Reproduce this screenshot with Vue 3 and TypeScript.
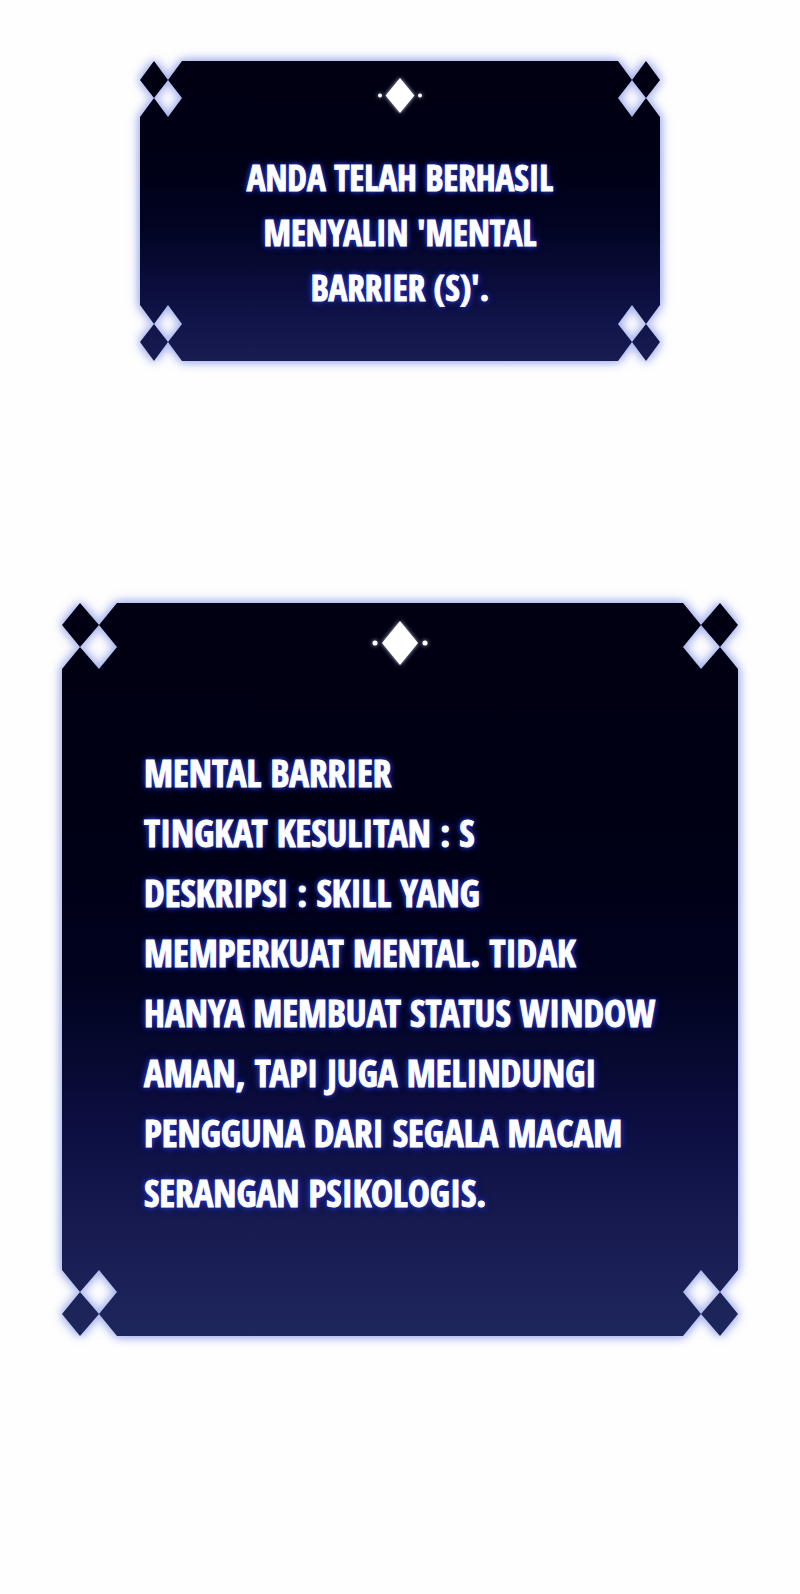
<script setup lang="ts">
interface StatusPanel {
  id: string
  kind: 'notice' | 'detail'
  lines: string[]
}

const panels: StatusPanel[] = [
  {
    id: 'copied',
    kind: 'notice',
    lines: ['ANDA TELAH BERHASIL', "MENYALIN 'MENTAL", "BARRIER (S)'."],
  },
  {
    id: 'skill',
    kind: 'detail',
    lines: [
      'MENTAL BARRIER',
      'TINGKAT KESULITAN : S',
      'DESKRIPSI : SKILL YANG',
      'MEMPERKUAT MENTAL. TIDAK',
      'HANYA MEMBUAT STATUS WINDOW',
      'AMAN, TAPI JUGA MELINDUNGI',
      'PENGGUNA DARI SEGALA MACAM',
      'SERANGAN PSIKOLOGIS.',
    ],
  },
]
</script>

<template>
  <main class="page">
    <section v-for="panel in panels" :key="panel.id" class="panel" :class="panel.kind">
      <div class="glow"><div class="plate"></div></div>
      <svg class="emblem" viewBox="-30 -22 60 44" aria-hidden="true">
        <path d="M0 -22 L18 0 L0 22 L-18 0 Z" />
        <circle cx="-25" cy="0" r="2.5" />
        <circle cx="25" cy="0" r="2.5" />
      </svg>
      <p class="text">
        <span v-for="line in panel.lines" :key="line" class="line">{{ line }}</span>
      </p>
    </section>
  </main>
</template>

<style>
body {
  margin: 0;
  background: #fefefe;
}
</style>

<style scoped>
.page {
  display: flex;
  flex-direction: column;
  align-items: center;
  gap: 242px;
  padding: 61px 0 258px;
}

.panel {
  position: relative;
  isolation: isolate;
  box-sizing: border-box;
  display: flex;
  flex-direction: column;
  align-items: center;
}

.notice {
  --x1: 14px;
  --x2: 28px;
  --x3: 42px;
  --y1: 19px;
  --y2: 37px;
  --y3: 56px;
  --fill: linear-gradient(#000012 0%, #000016 35%, #020422 55%, #0b0d3d 75%, #12154a 88%, #181c50 100%);
  width: 65%;
  padding: 16px 20px 46px;
  gap: 36px;
}

.detail {
  --x1: 18px;
  --x2: 37px;
  --x3: 55px;
  --y1: 22px;
  --y2: 44px;
  --y3: 66px;
  --fill: linear-gradient(#000012 0%, #000016 35%, #01031f 52%, #0d0f42 72%, #15184d 82%, #1b2056 92%, #1d275b 100%);
  width: 84.5%;
  padding: 18px 20px 113px 82px;
  gap: 78px;
}

.glow {
  position: absolute;
  inset: 0;
  z-index: -1;
  filter: drop-shadow(0 0 4px #a3aee6) drop-shadow(0 0 5px #b4bff6);
}

/* Lattice corners: one solid and one open diamond in each. */
.plate {
  --r1: calc(100% - var(--x1));
  --r2: calc(100% - var(--x2));
  --r3: calc(100% - var(--x3));
  --b1: calc(100% - var(--y1));
  --b2: calc(100% - var(--y2));
  --b3: calc(100% - var(--y3));
  height: 100%;
  background: var(--fill);
  clip-path: polygon(
    evenodd,
    var(--x3) 0, var(--r3) 0,
    var(--r2) var(--y1), var(--r3) var(--y2), var(--r2) var(--y3), var(--r1) var(--y2), var(--r2) var(--y1),
    var(--r1) 0, 100% var(--y1), var(--r1) var(--y2), 100% var(--y3),
    100% var(--b3),
    var(--r1) var(--b2), var(--r2) var(--b3), var(--r3) var(--b2), var(--r2) var(--b1), var(--r1) var(--b2),
    100% var(--b1), var(--r1) 100%, var(--r2) var(--b1), var(--r3) 100%,
    var(--x3) 100%,
    var(--x2) var(--b1), var(--x3) var(--b2), var(--x2) var(--b3), var(--x1) var(--b2), var(--x2) var(--b1),
    var(--x1) 100%, 0 var(--b1), var(--x1) var(--b2), 0 var(--b3),
    0 var(--y3),
    var(--x1) var(--y2), var(--x2) var(--y3), var(--x3) var(--y2), var(--x2) var(--y1), var(--x1) var(--y2),
    0 var(--y1), var(--x1) 0, var(--x2) var(--y1)
  );
}

.emblem {
  display: block;
  overflow: visible;
  fill: #fff;
  filter: drop-shadow(0 0 2px #b9b9d8);
}

.notice .emblem {
  width: 48px;
  height: 37px;
}

.detail .emblem {
  width: 60px;
  height: 44px;
  margin-left: -62px;
}

.text {
  margin: 0;
  color: #fff;
  font-family: "Open Sans Condensed", "Roboto Condensed", "Open Sans", sans-serif;
  font-weight: 700;
  -webkit-text-stroke: 1px #fff;
  text-shadow: 0 0 2px #2e3cc0, 0 0 4px #2a38b8, 0 0 6px #2432a8, 0 0 8px #1c289a;
}

.line {
  display: block;
  white-space: nowrap;
}

.notice .text {
  font-size: 35px;
  line-height: 55px;
  text-align: center;
}

.detail .text {
  align-self: stretch;
  font-size: 37px;
  line-height: 60px;
}
</style>
